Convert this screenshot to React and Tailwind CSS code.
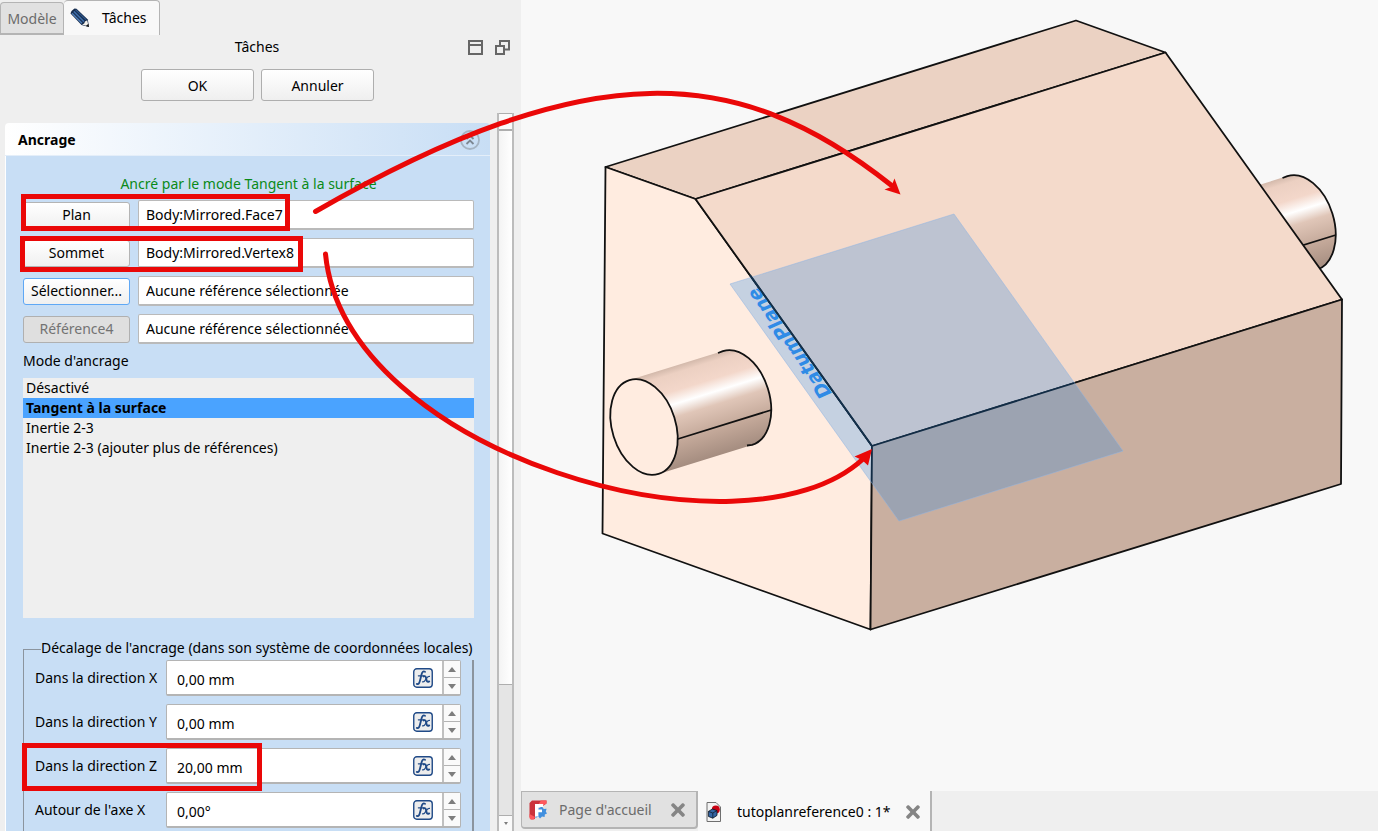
import { FaTimes } from 'react-icons/fa';

const REFERENCES = [
  { button: 'Plan', value: 'Body:Mirrored.Face7' },
  { button: 'Sommet', value: 'Body:Mirrored.Vertex8' },
  { button: 'Sélectionner...', value: 'Aucune référence sélectionnée', active: true },
  { button: 'Référence4', value: 'Aucune référence sélectionnée', disabled: true },
];

const MODES = [
  'Désactivé',
  'Tangent à la surface',
  'Inertie 2-3',
  'Inertie 2-3 (ajouter plus de références)',
];

const OFFSETS = [
  { id: 'dir-x', label: 'Dans la direction X', value: '0,00 mm' },
  { id: 'dir-y', label: 'Dans la direction Y', value: '0,00 mm' },
  { id: 'dir-z', label: 'Dans la direction Z', value: '20,00 mm' },
  { id: 'axis-x', label: "Autour de l'axe X", value: '0,00°' },
];

function PencilIcon() {
  return (
    <svg width="20" height="20" viewBox="0 0 20 20" className="shrink-0">
      <path d="M0.5 5.5 L1.5 3 L4.5 0.5 L6.5 0.8 L17.8 11.5 L19 19 L11.5 17 Z" fill="#14294a" />
      <path d="M2 5.2 L12 15.2" stroke="#4f7db6" strokeWidth="1.5" />
      <path d="M3.8 3.4 L14 13.6" stroke="#3c6aa5" strokeWidth="1.7" />
      <path d="M5.6 1.8 L16 11.8" stroke="#2d5589" strokeWidth="1.2" />
      <path d="M12 16.4 L14.2 15.6 L15 13.6 L17.2 12.2 L18.6 18.6 Z" fill="#f4f1ea" />
      <path d="M15.8 18 L18.4 15.8 L19 19 Z" fill="#111" />
    </svg>
  );
}

function FxIcon() {
  return (
    <svg width="20" height="20" viewBox="0 0 20 20" className="block">
      <rect x="0.75" y="0.75" width="18.5" height="18.5" rx="3" fill="#ededed" stroke="#204a87" strokeWidth="1.4" />
      <g fill="none" stroke="#204a87" strokeLinecap="round">
        <path d="M3.8 15.9 C5.8 16.8 6.6 14.4 7.2 11.8 L8.6 6.2 C9.2 3.6 10.4 3 12 3.8" strokeWidth="1.8" />
        <path d="M5.4 7.8 L11 7.8" strokeWidth="1.3" />
        <path d="M10.6 8.4 C12.2 7.6 12.8 8.6 13.2 10.6 C13.6 13.2 14.2 14.6 16.2 13.4" strokeWidth="1.9" />
        <path d="M16.4 8.4 C14.8 8 13.8 9.8 13 11 C12 12.8 11.2 14.4 9.6 13.8" strokeWidth="1.3" />
      </g>
    </svg>
  );
}

function Arrow({ down }) {
  return (
    <svg width="8" height="5" viewBox="0 0 8 5">
      <path d={down ? 'M0 0 H8 L4 5 Z' : 'M0 5 H8 L4 0 Z'} fill="#7d7d7d" />
    </svg>
  );
}

function FreeCadIcon() {
  return (
    <svg width="20" height="20" viewBox="0 0 20 20">
      <path d="M3 0.5 H17.5 V3.5 L14 6 H6 V19 L2.5 19.5 L0.5 17 V3 Z" fill="#cb333b" />
      <path d="M12 0.5 H17.5 V3.5 L15 5 H9 Z" fill="#ff585d" />
      <path d="M0.5 14 L6 17 L5 19.5 H1.5 L0.5 18 Z" fill="#ff585d" />
      <path d="M13 6.5 L14.8 9 L17.6 8.8 L16.8 11.4 L18 13.6 L15.8 14.4 L15.6 17 L13 16.4 L11 18.6 L9.4 16.6 L6.4 18 V10 L12 7 Z" fill="#418fde" />
      <path d="M6 4 H14.2 V7 H9.4 V9.4 H13 V12.2 H9.4 V16.4 H6 Z" fill="#fff" />
    </svg>
  );
}

function DocumentIcon() {
  return (
    <svg width="15" height="20" viewBox="0 0 15 20">
      <path d="M1 0.5 H10 L14.5 5 V19.5 H1 Z" fill="#f3f3f3" stroke="#6f6f6f" />
      <circle cx="9.8" cy="7.6" r="4" fill="#c80012" />
      <path d="M2.4 9.4 L6.5 7 L11 8.6 V13.4 L6.8 16.2 L2.4 14.4 Z" fill="#3465a4" stroke="#0b1521" strokeWidth="0.8" />
      <path d="M2.4 9.4 L6.8 11 L11 8.6 M6.8 11 V16.2" fill="none" stroke="#0b1521" strokeWidth="0.7" />
    </svg>
  );
}

function SidebarHeader() {
  return (
    <header>
      <nav className="flex items-end h-[35px]">
        <button className="flex items-center justify-center w-16 h-[33px] pt-0.5 rounded-t-sm border border-b-2 border-[#b4b4b4] bg-[#e1e1e1] text-[#6c6c6c]">
          Modèle
        </button>
        <button className="flex items-center gap-3 w-24 h-[35px] pl-1.5 rounded-t-sm border-r border-t border-[#b4b4b4] bg-[#f8f8f8]">
          <PencilIcon />
          Tâches
        </button>
      </nav>
      <div className="flex items-center h-6 pl-[46px] pr-[11px]">
        <h1 className="flex-1 text-center">Tâches</h1>
        <div className="flex gap-3">
          <button aria-label="Réduire">
            <svg width="15" height="15" viewBox="0 0 15 15" fill="none" stroke="#666" strokeWidth="2" className="block">
              <path d="M1 1 H14 V14 H1 Z M1 5 H14" />
            </svg>
          </button>
          <button aria-label="Détacher">
            <svg width="15" height="15" viewBox="0 0 15 15" fill="none" stroke="#666" strokeWidth="2" className="block">
              <path d="M1 6 H9 V14 H1 Z M5 5 V1 H14 V9.5 H10" />
            </svg>
          </button>
        </div>
      </div>
      <div className="flex justify-center gap-[7px] pt-[10px] pb-3 pr-[6px]">
        <button className="w-[113px] h-8 pt-0.5 rounded-[3px] border border-[#aeaeae] bg-linear-to-b from-white to-[#efefef]">OK</button>
        <button className="w-[113px] h-8 pt-0.5 rounded-[3px] border border-[#aeaeae] bg-linear-to-b from-white to-[#efefef]">Annuler</button>
      </div>
    </header>
  );
}

function ReferenceRow({ button, value, active, disabled }) {
  let look = 'border-[#b4b4b4] bg-linear-to-b from-white to-[#f0f0f0]';
  if (active) look = 'border-[#5fa8f5] bg-linear-to-b from-white to-[#f0f0f0]';
  if (disabled) look = 'border-[#b0b0b0] bg-[#dfdfdf] text-[#737373]';

  return (
    <div className="flex items-center gap-2">
      <button disabled={disabled} className={`w-[107px] h-[27px] shrink-0 rounded-[3px] border ${look}`}>
        {button}
      </button>
      <input
        aria-label={button}
        defaultValue={value}
        className="flex-1 min-w-0 h-[30px] px-[7px] rounded-[2px] border border-b-2 border-[#bababa] bg-white"
      />
    </div>
  );
}

function OffsetRow({ id, label, value }) {
  return (
    <div className="flex items-center">
      <label htmlFor={id} className="w-[131px] shrink-0 whitespace-nowrap">{label}</label>
      <div className="flex flex-1 min-w-0 h-9 rounded-[2px] border border-b-2 border-[#b4b4b4] bg-white">
        <input id={id} defaultValue={value} className="flex-1 min-w-0 px-[10px] pt-1" />
        <button aria-label={`Expression : ${label}`} className="pr-[9px]">
          <FxIcon />
        </button>
        <div className="flex flex-col w-[18px] border-l-2 border-[#c0c0c0] bg-[#fafafa]">
          <button aria-label="Augmenter" className="flex flex-1 items-center justify-center border-b border-[#b4b4b4]">
            <Arrow />
          </button>
          <button aria-label="Diminuer" className="flex flex-1 items-center justify-center">
            <Arrow down />
          </button>
        </div>
      </div>
    </div>
  );
}

function AttachmentPanel() {
  return (
    <section className="flex flex-col flex-1 min-w-0 pt-[10px] pl-[5px] pr-[7px]">
      <div className="flex items-center justify-between h-[33px] shrink-0 pt-0.5 pl-[13px] pr-[10px] rounded-t-sm border-b border-[#e4eef9] bg-linear-to-r from-white to-[#c8def5]">
        <h2 className="font-bold">Ancrage</h2>
        <button aria-label="Replier">
          <svg width="20" height="20" viewBox="0 0 20 20" fill="none" className="block">
            <circle cx="10" cy="10" r="9" stroke="#a5b4c3" strokeWidth="1.8" />
            <path d="M6.5 9 L10 5.5 L13.5 9 M6.5 14 L10 10.5 L13.5 14" stroke="#7d8893" strokeWidth="1.8" />
          </svg>
        </button>
      </div>
      <div className="flex-1 min-h-0 overflow-hidden pt-[18px] pl-[17px] pr-4 border-l border-white bg-[#c8def5]">
        <p className="h-[26px] text-center text-[#0a8a17]">Ancré par le mode Tangent à la surface</p>
        <div className="flex flex-col gap-2">
          {REFERENCES.map((ref) => (
            <ReferenceRow key={ref.button} {...ref} />
          ))}
        </div>
        <p className="mt-[7px]">Mode d'ancrage</p>
        <ul className="h-60 mt-[7px] bg-[#efefef]">
          {MODES.map((mode, i) => (
            <li key={mode} className={`h-5 px-[3px] ${i === 1 ? 'bg-[#4aa3ff] font-bold' : ''}`}>
              {mode}
            </li>
          ))}
        </ul>
        <fieldset className="mt-5 min-w-0 h-[400px] px-[11px] border border-r-2 border-[#8b949e]">
          <legend className="w-[433px] h-[22px] ml-[6px] overflow-hidden whitespace-nowrap">
            Décalage de l'ancrage (dans son système de coordonnées locales)
          </legend>
          <div className="flex flex-col gap-2">
            {OFFSETS.map((row) => (
              <OffsetRow key={row.id} {...row} />
            ))}
          </div>
        </fieldset>
      </div>
    </section>
  );
}

function ScrollBar() {
  return (
    <div className="flex flex-col w-[17px] mr-[7px] border-x-2 border-[#bcbcbc] bg-[#e5e5e5]">
      <button aria-label="Défiler vers le haut" className="flex items-center justify-center h-[18px] shrink-0 border-t border-b-2 border-[#aeaeae] bg-[#fafafa]">
        <svg width="4" height="3" viewBox="0 0 4 3"><path d="M0 3 H4 L2 0 Z" fill="#7d7d7d" /></svg>
      </button>
      <div className="grow-[81] bg-linear-to-r from-[#f4f4f4] to-white border-b border-[#aeaeae]" />
      <div className="grow-[19]" />
      <button aria-label="Défiler vers le bas" className="flex items-center justify-center h-4 shrink-0 border-t border-[#aeaeae] bg-[#fafafa]">
        <svg width="4" height="3" viewBox="0 0 4 3"><path d="M0 0 H4 L2 3 Z" fill="#7d7d7d" /></svg>
      </button>
    </div>
  );
}

function Viewport() {
  return (
    <svg viewBox="521 0 857 791" width="857" height="791" className="block" strokeLinejoin="round">
      <defs>
        {/* shading runs across the cylinder, perpendicular to its axis */}
        <linearGradient id="cylinder" gradientUnits="userSpaceOnUse" x1="629.4" y1="380.1" x2="658.6" y2="473.9">
          <stop offset="0" stopColor="#d3b9ab" />
          <stop offset="0.07" stopColor="#ecd0c2" />
          <stop offset="0.24" stopColor="#f3d7ca" />
          <stop offset="0.37" stopColor="#ffffff" />
          <stop offset="0.5" stopColor="#e0c6b8" />
          <stop offset="0.75" stopColor="#c3a899" />
          <stop offset="1" stopColor="#a58d80" />
        </linearGradient>
      </defs>

      {/* Far shaft */}
      <g transform="translate(564.5 -175)">
        <path d="M629.4 380.1 L722.9 351.1 A31.8 49.1 -17.3 0 1 752.1 444.9 L658.6 473.9 Z" fill="url(#cylinder)" />
        <path d="M718 353 L722.9 351.1 A31.8 49.1 -17.3 0 1 752.1 444.9 M677.8 439 L771.3 410" fill="none" stroke="#111" strokeWidth="1.8" />
      </g>

      {/* Body */}
      <g stroke="#111" strokeWidth="1.8">
        <path d="M605.5 167 L1076 20.5 L1165.5 52.5 L695.5 199 Z" fill="#ebd2c3" />
        <path d="M605.5 167 L695.5 199 L872 446 L870.5 629.5 L602.5 533.5 Z" fill="#ffece0" />
        <path d="M695.5 199 L1165.5 52.5 L1342 299.5 L872 446 Z" fill="#f4dacb" />
        <path d="M872 446 L1342 299.5 L1341 484 L870.5 629.5 Z" fill="#c9afa0" />
      </g>

      {/* Near shaft */}
      <path d="M629.4 380.1 L722.9 351.1 A31.8 49.1 -17.3 0 1 752.1 444.9 L658.6 473.9 Z" fill="url(#cylinder)" />
      <path d="M718 353 L722.9 351.1 A31.8 49.1 -17.3 0 1 752.1 444.9 L747 445.5 M677.8 439 L771.3 410" fill="none" stroke="#111" strokeWidth="1.8" />
      <ellipse cx="644" cy="427" rx="31.8" ry="49.1" transform="rotate(-17.3 644 427)" fill="#ffece0" stroke="#111" strokeWidth="1.8" />

      {/* Datum plane */}
      <path d="M730 284 L954 214 L1123 451 L899 521 Z" fill="#1880e4" fillOpacity="0.25" stroke="#8fb6e6" strokeOpacity="0.5" />
      <text
        transform="translate(832 393) rotate(-125)"
        className="text-[19px] font-bold italic font-['DejaVu_Sans',sans-serif]"
        fill="#2f8be6"
      >
        DatumPlane
      </text>
      <path d="M750 275 L872 446" stroke="#14304a" strokeWidth="1.8" />
    </svg>
  );
}

function DocumentTabs() {
  return (
    <nav className="flex items-start h-10 shrink-0 bg-[#efefef]">
      <button className="flex items-center w-[177px] h-[38px] pl-[7px] rounded-b-sm border border-b-2 border-r-2 border-[#b4b4b4] bg-[#e1e1e1] text-[#6c6c6c]">
        <FreeCadIcon />
        <span className="ml-[10px] flex-1 text-left">Page d'accueil</span>
        <FaTimes size={20} color="#858585" className="mr-2" />
      </button>
      <button className="flex items-center w-[234px] h-10 pt-0.5 pl-2 border-r-2 border-[#b4b4b4] bg-[#f8f8f8]">
        <DocumentIcon />
        <span className="ml-4 flex-1 text-left whitespace-nowrap">tutoplanreference0 : 1*</span>
        <FaTimes size={20} color="#858585" className="mr-[7px]" />
      </button>
    </nav>
  );
}

function Annotations() {
  return (
    <svg width="1378" height="831" viewBox="0 0 1378 831" className="absolute top-0 left-0 pointer-events-none" fill="none" stroke="#ea0808" strokeWidth="5">
      <path d="M23.5 196.5 H287.5 V228.5 H23.5 Z" />
      <path d="M22.5 238.5 H300.5 V269.5 H22.5 Z" />
      <path d="M24.5 745.5 H259.5 V788.5 H24.5 Z" />
      <g strokeLinecap="round">
        <path d="M315.5 211.5 C592 53 739 64 891 185" />
        <path d="M325.5 254 C345 455 745 568 863 459" />
      </g>
      <g fill="#ea0808" stroke="none">
        <path d="M900.5 194.5 L884.5 189.5 L891 187 L894.5 178.5 Z" />
        <path d="M872 449 L868 465.5 L862 460 L854.5 456.5 Z" />
      </g>
    </svg>
  );
}

export default function App() {
  return (
    <div className="relative flex h-screen overflow-hidden bg-[#efefef] text-black text-[14px] leading-5 font-['Noto_Sans',sans-serif]">
      <aside className="flex flex-col w-[521px] shrink-0">
        <SidebarHeader />
        <div className="flex flex-1 min-h-0">
          <AttachmentPanel />
          <ScrollBar />
        </div>
      </aside>
      <main className="flex flex-col flex-1 min-w-0">
        <div className="flex-1 min-h-0 overflow-hidden bg-[#f8f8f8]">
          <Viewport />
        </div>
        <DocumentTabs />
      </main>
      <Annotations />
    </div>
  );
}
